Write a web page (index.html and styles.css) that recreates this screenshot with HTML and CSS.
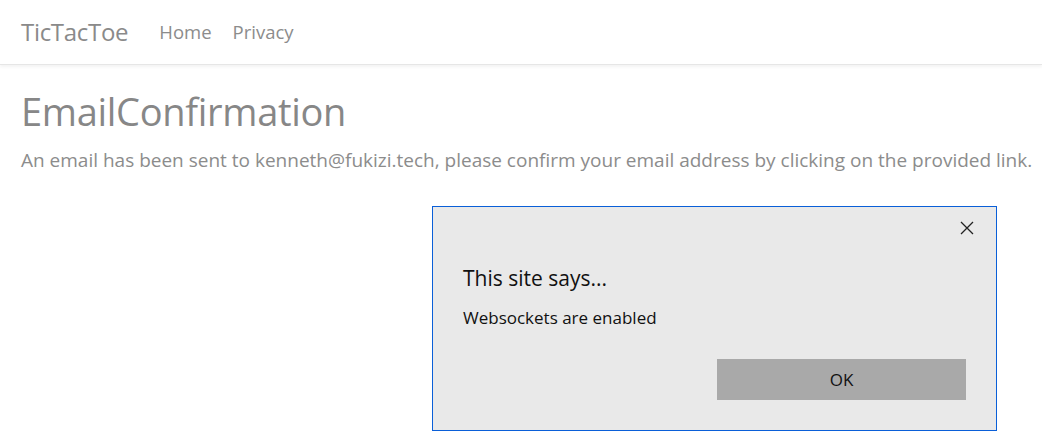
FILE: index.html
```html
<!DOCTYPE html>
<html>
<head>
<meta charset="utf-8">
<link rel="stylesheet" href="styles.css">
</head>
<body>
<header class="navbar">
  <a class="brand">TicTacToe</a>
  <nav class="links">
    <a class="link">Home</a>
    <a class="link">Privacy</a>
  </nav>
</header>
<main class="content">
  <h1 class="title">EmailConfirmation</h1>
  <p class="text">An email has been sent to kenneth@fukizi.tech, please confirm your email address by clicking on the provided link.</p>
</main>
<div class="dialog">
  <div class="close">
    <svg width="14" height="14" viewBox="0 0 14 14"><path d="M1 1L13 13M13 1L1 13" stroke="#222" stroke-width="1.3" fill="none"/></svg>
  </div>
  <div class="dlg-title">This site says...</div>
  <div class="dlg-msg">Websockets are enabled</div>
  <div class="dlg-actions">
    <button class="ok">OK</button>
  </div>
</div>
</body>
</html>
```
FILE: styles.css
```css
* { box-sizing: border-box; }
html, body { margin: 0; padding: 0; background: #fff; }
body {
  font-family: "Open Sans", "Noto Sans", sans-serif;
  color: #888;
  width: 1042px;
  height: 447px;
  overflow: hidden;
  position: relative;
}
.navbar {
  height: 65px;
  display: flex;
  align-items: center;
  padding: 0 21px 2px;
  border-bottom: 1px solid #e6e6e6;
  box-shadow: 0 2px 3px rgba(0,0,0,0.05);
}
.brand {
  font-size: 24px;
  color: #8a8a8a;
  margin-right: 31px;
  letter-spacing: -0.3px;
}
.links { display: flex; gap: 21px; }
.link { font-size: 18.5px; color: #8c8c8c; }
.content { padding: 22px 21px 0; }
.title {
  margin: 0;
  font-weight: 400;
  font-size: 38px;
  line-height: 48px;
  color: #878787;
  letter-spacing: -0.3px;
}
.text {
  margin: 12px 0 0;
  font-size: 19px;
  color: #8c8c8c;
  white-space: nowrap;
}
.dialog {
  position: absolute;
  left: 432px;
  top: 206px;
  width: 565px;
  height: 225px;
  background: #e9e9e9;
  border: 1px solid #0a5fd8;
  display: flex;
  flex-direction: column;
  padding: 0 30px 0 30px;
  color: #111;
}
.close {
  display: flex;
  justify-content: flex-end;
  padding-top: 14px;
  margin-right: -8px;
  height: 40px;
}
.dlg-title {
  font-size: 21px;
  margin-top: 16px;
  line-height: 30px;
  color: #111;
}
.dlg-msg {
  font-size: 17px;
  margin-top: 14px;
  line-height: 22px;
  color: #111;
}
.dlg-actions {
  display: flex;
  justify-content: flex-end;
  margin-top: 30px;
}
.ok {
  width: 249px;
  height: 41px;
  background: #a9a9a9;
  border: none;
  font-family: "Open Sans", "Noto Sans", sans-serif;
  font-size: 17px;
  color: #111;
}
```
